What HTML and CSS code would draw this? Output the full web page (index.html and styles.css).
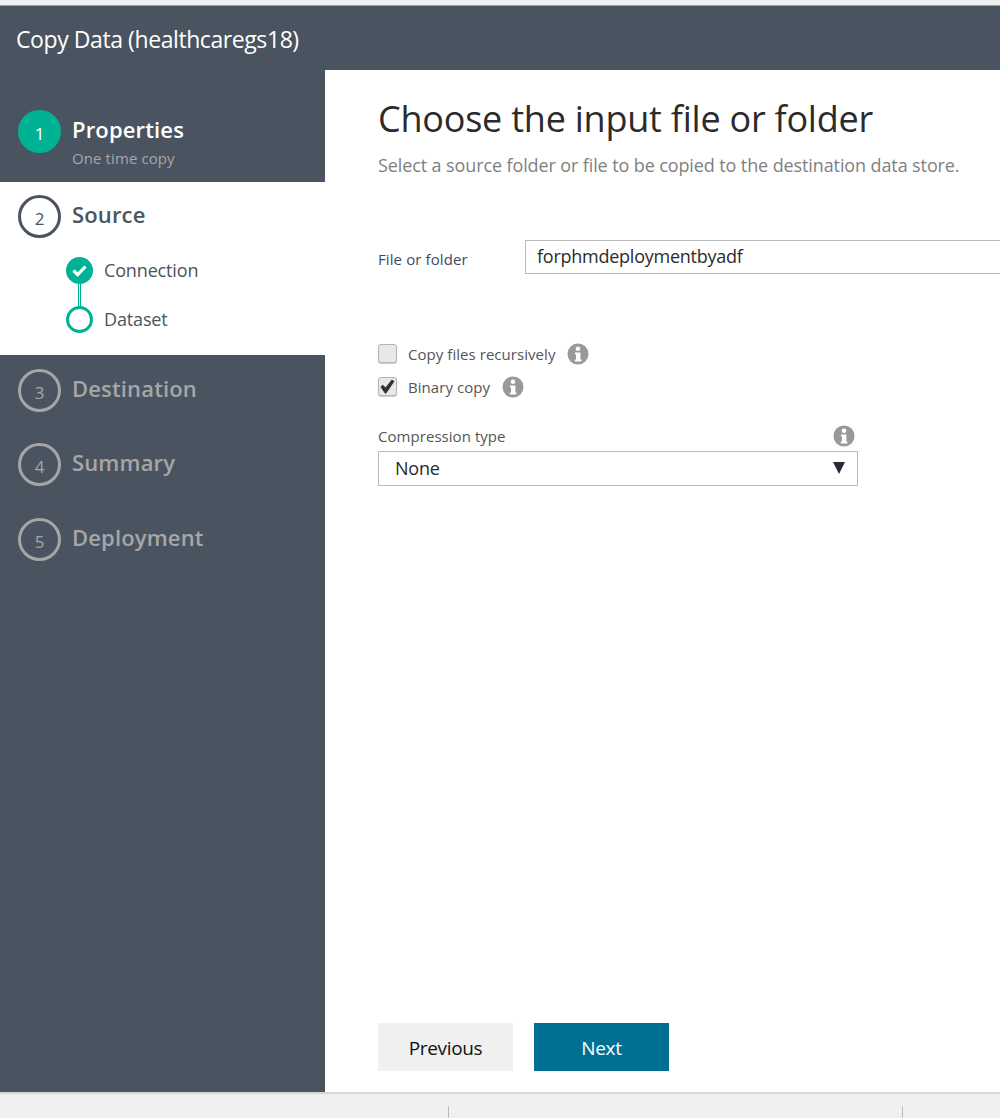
FILE: index.html
```html
<!DOCTYPE html>
<html lang="en">
<head>
  <meta charset="UTF-8">
  <title>Copy Data</title>
  <link rel="stylesheet" href="styles.css">
</head>
<body>
<div class="topstrip"></div>
<div class="header">Copy Data (healthcaregs18)</div>
<div class="main">
  <div class="sidebar">
    <div class="step step-done">
      <div class="num">1</div>
      <div>
        <div class="step-name">Properties</div>
        <div class="step-sub">One time copy</div>
      </div>
    </div>
    <div class="source">
      <div class="step step-active">
        <div class="num">2</div>
        <div class="step-name">Source</div>
      </div>
      <div class="substeps">
        <div class="substep">
          <svg class="subicon" width="28" height="28" viewBox="0 0 28 28">
            <circle cx="13.5" cy="13.5" r="13.5" fill="#00b294"/>
            <path d="M7.5 13.500l4.200 4.200L19.500 9.500" fill="none" stroke="#fff" stroke-width="3.200"/>
          </svg>
          <span>Connection</span>
        </div>
        <div class="connector"></div>
        <div class="substep">
          <svg class="subicon" width="28" height="28" viewBox="0 0 28 28">
            <circle cx="13.5" cy="13.5" r="12" fill="#fff" stroke="#00b294" stroke-width="3"/>
          </svg>
          <span>Dataset</span>
        </div>
      </div>
    </div>
    <div class="step step-todo">
      <div class="num">3</div>
      <div class="step-name">Destination</div>
    </div>
    <div class="step step-todo">
      <div class="num">4</div>
      <div class="step-name">Summary</div>
    </div>
    <div class="step step-todo">
      <div class="num">5</div>
      <div class="step-name">Deployment</div>
    </div>
  </div>
  <div class="content">
    <h1>Choose the input file or folder</h1>
    <p class="desc">Select a source folder or file to be copied to the destination data store.</p>
    <div class="file-row">
      <label class="file-label">File or folder</label>
      <div class="file-input">forphmdeploymentbyadf</div>
    </div>
    <div class="check-row">
      <span class="check"></span>
      <span class="check-label">Copy files recursively</span>
      <svg class="info" width="22" height="22" viewBox="0 0 22 22"><circle cx="11" cy="11" r="10.5" fill="#999"/><circle cx="11" cy="5.800" r="2.300" fill="#fff"/><path d="M8 9.500h5.400v7h1v2H7.800v-2h1.200v-5H8z" fill="#fff"/></svg>
    </div>
    <div class="check-row">
      <span class="check">
        <svg width="17" height="17" viewBox="0 0 17 17"><path d="M1.500 9l2.300-2.200 2.700 2.700L12.800 1.500l2.700 1.800L7.200 15.500h-1.200z" fill="#333"/></svg>
      </span>
      <span class="check-label">Binary copy</span>
      <svg class="info" width="22" height="22" viewBox="0 0 22 22"><circle cx="11" cy="11" r="10.5" fill="#999"/><circle cx="11" cy="5.800" r="2.300" fill="#fff"/><path d="M8 9.500h5.400v7h1v2H7.800v-2h1.200v-5H8z" fill="#fff"/></svg>
    </div>
    <div class="compression">
      <div class="compression-head">
        <span>Compression type</span>
        <svg class="info" width="22" height="22" viewBox="0 0 22 22"><circle cx="11" cy="11" r="10.5" fill="#999"/><circle cx="11" cy="5.800" r="2.300" fill="#fff"/><path d="M8 9.500h5.400v7h1v2H7.800v-2h1.200v-5H8z" fill="#fff"/></svg>
      </div>
      <div class="select">
        <span>None</span>
        <svg width="12" height="12" viewBox="0 0 12 12"><path d="M0 0h12L6 12z" fill="#252c35"/></svg>
      </div>
    </div>
    <div class="buttons">
      <button class="btn btn-prev">Previous</button>
      <button class="btn btn-next">Next</button>
    </div>
  </div>
</div>
<div class="footer">
  <div class="divider"></div>
  <div class="divider"></div>
</div>
</body>
</html>
```

FILE: styles.css
```css
html, body {
  margin: 0;
  height: 1118px;
  overflow: hidden;
}
body {
  font-family: "Open Sans", "Noto Sans", sans-serif;
  display: flex;
  flex-direction: column;
  background: #fff;
  color: #333;
}
.topstrip {
  height: 5px;
  background: #f0f0f0;
  border-bottom: 1px solid #a0a0a0;
}
.header {
  height: 64px;
  background: #4a5460;
  color: #fff;
  font-size: 23px;
  letter-spacing: -0.42px;
  line-height: 67px;
  padding-left: 16px;
  box-sizing: border-box;
}
.main {
  height: 1022px;
  display: flex;
}
.sidebar {
  width: 325px;
  background: #4a5460;
  padding-top: 40px;
  box-sizing: border-box;
}
.step {
  display: flex;
  align-items: flex-start;
  gap: 11px;
  padding-left: 18px;
  height: 43px;
}
.num {
  width: 43px;
  height: 43px;
  flex: none;
  border-radius: 50%;
  box-sizing: border-box;
  border: 3px solid #a6a6a6;
  color: #a6a6a6;
  font-size: 17px;
  line-height: 39px;
  text-align: center;
  padding-top: 1px;
}
.step-name {
  font-size: 22px;
  font-weight: 600;
  letter-spacing: 0.15px;
  line-height: 28px;
  margin-top: 5px;
  color: #a6a6a6;
}
.step-sub {
  font-size: 15px;
  letter-spacing: 0.1px;
  line-height: 20px;
  margin-top: 5px;
  color: #a6a6a6;
}
.step-done {
  height: 72px;
}
.step-done .num {
  background: #00b294;
  border-color: #00b294;
  color: #fff;
}
.step-done .step-name {
  color: #fff;
}
.source {
  background: #fff;
  height: 173px;
  padding-top: 13px;
  box-sizing: border-box;
  margin-bottom: 14px;
}
.step-active .num {
  border-color: #4a5460;
  color: #4a5460;
}
.step-active .step-name {
  color: #4a5460;
}
.substeps {
  padding: 19px 0 0 66px;
}
.substep {
  display: flex;
  align-items: center;
  gap: 10px;
  height: 28px;
  font-size: 18px;
  letter-spacing: -0.15px;
  line-height: 26px;
  color: #4a5460;
}
.substep span {
  margin-bottom: 2px;
}
.connector {
  width: 1px;
  height: 23px;
  margin-left: 12px;
  border-left: 1px solid #00b294;
  border-right: 1px solid #00b294;
  background: #fff;
  margin-top: -1px;
  margin-bottom: -1px;
}
.step-todo {
  margin-bottom: 31px;
}
.step-todo:last-child {
  padding-top: 0.5px;
}
.content {
  flex: 1;
  position: relative;
  padding: 24px 0 0 53px;
  box-sizing: border-box;
  min-width: 0;
}
h1 {
  margin: 0;
  font-size: 36px;
  font-weight: 400;
  line-height: 50px;
  letter-spacing: -0.23px;
  color: #2b2b2b;
  white-space: nowrap;
}
.desc {
  margin: 8px 0 0;
  font-size: 18px;
  letter-spacing: -0.11px;
  line-height: 26px;
  color: #7f7f7f;
  white-space: nowrap;
}
.file-row {
  display: flex;
  align-items: flex-start;
  margin-top: 62px;
}
.file-label {
  width: 147px;
  flex: none;
  font-size: 15px;
  letter-spacing: 0.1px;
  color: #3e4a63;
  padding-top: 9px;
}
.file-input {
  flex: 1;
  height: 34px;
  box-sizing: border-box;
  border: 1px solid #bbb;
  border-right: none;
  font-size: 18px;
  letter-spacing: -0.25px;
  line-height: 31px;
  padding-left: 11px;
  color: #2b2b2b;
}
.check-row {
  display: flex;
  align-items: center;
  height: 33px;
  font-size: 15px;
  letter-spacing: 0.05px;
  color: #555;
}
.file-row + .check-row {
  margin-top: 63px;
}
.check {
  width: 19px;
  height: 19px;
  box-sizing: border-box;
  border: 1px solid #b4b4b4;
  border-radius: 3px;
  background: #e8e8e8;
  display: flex;
  align-items: center;
  justify-content: center;
  margin-right: 11px;
  box-shadow: 0 1px 1px #ccc;
}
.check-label {
  margin-right: 12px;
}
.compression {
  width: 480px;
  margin-top: 21px;
}
.compression-head {
  display: flex;
  justify-content: space-between;
  align-items: center;
  height: 24px;
  font-size: 15px;
  letter-spacing: 0.05px;
  color: #555;
  padding-right: 3px;
  margin-bottom: 3px;
}
.select {
  height: 35px;
  box-sizing: border-box;
  border: 1px solid #bbb;
  display: flex;
  align-items: center;
  justify-content: space-between;
  padding: 0 12px 2px 16px;
  font-size: 18px;
  letter-spacing: -0.2px;
  color: #2b2b2b;
}
.buttons {
  position: absolute;
  left: 53px;
  top: 953px;
  display: flex;
  gap: 21px;
}
.btn {
  width: 135px;
  height: 48px;
  border: none;
  font-family: inherit;
  font-size: 19px;
  letter-spacing: -0.35px;
  padding: 2px 0 0;
}
.btn-prev {
  background: #f0f0f0;
  color: #111;
}
.btn-next {
  background: #006f94;
  color: #fff;
}
.footer {
  height: 26px;
  box-sizing: border-box;
  border-top: 2px solid #d6d6d6;
  background: #f0f0f0;
  display: flex;
  align-items: flex-end;
  gap: 453px;
  padding-left: 448px;
}
.divider {
  width: 1px;
  height: 12px;
  background: #bbb;
}
```
